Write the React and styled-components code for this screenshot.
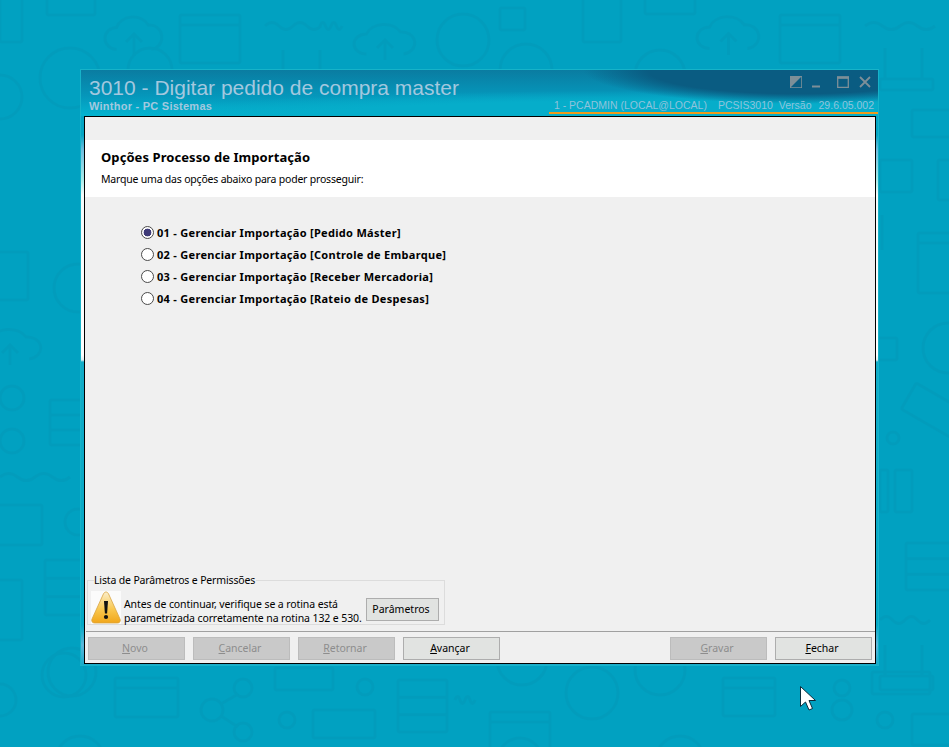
import styled, { createGlobalStyle } from 'styled-components';

const GlobalStyle = createGlobalStyle`
  html, body {
    margin: 0;
    padding: 0;
    background: #01a1c1;
  }
`;

const Desktop = styled.div`
  position: relative;
  width: 949px;
  height: 747px;
  overflow: hidden;
  background: #01a1c1;
  padding: 69px 0 0 80px;
  box-sizing: border-box;
  font-family: "Noto Sans", "DejaVu Sans", sans-serif;
  font-size: 11px;
  color: #000;
`;

const WallpaperSvg = styled.svg`
  position: absolute;
  inset: 0;
  opacity: 0.48;
  filter: blur(0.5px);
`;

const CursorSvg = styled.svg`
  position: absolute;
  left: 799px;
  top: 685px;
`;

const Window = styled.div`
  position: relative;
  width: 799px;
  height: 597px;
  box-sizing: border-box;
  display: flex;
  flex-direction: column;
  border: 1px solid #16b3c9;
  background: linear-gradient(
    180deg,
    #05a5c4 0,
    #05a5c4 65px,
    #6fbfe0 80px,
    #a9ecea 110px,
    #f4fbfb 125px,
    #ffffff 285px,
    #dfeef2 290px,
    #12acc8 292px,
    #05a8c6 555px,
    #5cb8dc 575px,
    #12a8c8 597px
  );
`;

const TitleBar = styled.div`
  position: relative;
  height: 46px;
  flex: none;
  display: flex;
  justify-content: space-between;
  background:
    radial-gradient(ellipse 215px 34px at 90% 0, #0a5c82 0 70%, transparent 100%),
    radial-gradient(ellipse 560px 30px at 72% 110%, #06adca 0 65%, transparent 100%),
    linear-gradient(180deg, #0a7ca1 0, #0596ba 55%, #03b4d0 100%);
`;

const TitleGroup = styled.div`
  padding: 5px 0 0 8px;
`;

const Title = styled.div`
  font-family: "Liberation Sans", Arial, sans-serif;
  font-size: 21px;
  line-height: 25px;
  color: #a3c8df;
`;

const Subtitle = styled.div`
  font-family: "Liberation Sans", Arial, sans-serif;
  font-size: 11px;
  font-weight: bold;
  line-height: 13px;
  letter-spacing: 0.25px;
  color: #a3c8df;
`;

const RightGroup = styled.div`
  display: flex;
  flex-direction: column;
  align-items: stretch;
  width: 329px;
`;

const Controls = styled.div`
  display: flex;
  justify-content: flex-end;
  align-items: center;
  gap: 10px;
  height: 29px;
  box-sizing: border-box;
  padding: 0 7px 5px 0;
`;

const ControlIcon = styled.svg`
  display: block;
  margin-left: ${(p) => p.$gap || 0}px;
`;

const StatusLine = styled.div`
  display: flex;
  justify-content: flex-end;
  height: 13px;
  padding-right: 4px;
  border-bottom: 2px solid #ef9a1c;
  font-family: "Liberation Sans", Arial, sans-serif;
  font-size: 10.5px;
  line-height: 13px;
  color: #8fc3dc;
  white-space: pre;
`;

const StatusItem = styled.span`
  margin-left: ${(p) => p.$gap || 0}px;
`;

const Content = styled.div`
  width: 792px;
  height: 548px;
  margin-left: 3px;
  box-sizing: border-box;
  border: 1px solid #000;
  background: #f0f0f0;
  display: flex;
  flex-direction: column;
`;

const TopStrip = styled.div`
  height: 23px;
  flex: none;
`;

const Banner = styled.div`
  height: 57px;
  flex: none;
  box-sizing: border-box;
  padding: 9px 0 0 16px;
  background: #fff;
`;

const BannerTitle = styled.div`
  font-size: 13px;
  font-weight: 700;
  line-height: 17px;
  color: #000;
  letter-spacing: 0.07px;
`;

const BannerText = styled.div`
  margin-top: 6px;
  font-size: 10.5px;
  line-height: 14px;
  letter-spacing: -0.2px;
`;

const Options = styled.div`
  flex: 1;
  display: flex;
  flex-direction: column;
  padding: 24px 0 0 56px;
`;

const OptionRow = styled.label`
  display: flex;
  align-items: center;
  gap: 3px;
  height: 22px;
  font-size: 11px;
  font-weight: 700;
  letter-spacing: 0.3px;
`;

const Radio = styled.input`
  appearance: none;
  width: 13px;
  height: 13px;
  margin: 0;
  border: 1px solid #4a4a4a;
  border-radius: 50%;
  background: #fff;
  flex: none;
  &:checked {
    background: radial-gradient(circle, #3e3a78 0 3.6px, #fff 4.2px);
  }
`;

const ParamGroup = styled.fieldset`
  width: 358px;
  height: 52px;
  margin: 0 0 6px 2px;
  padding: 0 5px 0 3px;
  box-sizing: border-box;
  border: 1px solid #dcdcdc;
  display: flex;
  align-items: flex-start;
  gap: 3px;
`;

const ParamLegend = styled.legend`
  margin-left: 3px;
  padding: 0 1px 0 0;
  font-size: 10.5px;
  line-height: 15px;
  letter-spacing: -0.15px;
`;

const ParamText = styled.div`
  flex: 1;
  margin-top: 9px;
  font-size: 10.5px;
  line-height: 14px;
  letter-spacing: -0.1px;
  white-space: nowrap;
`;

const WarningIcon = styled.svg`
  flex: none;
  margin-top: 3px;
`;

const ActionButton = styled.button`
  width: ${(p) => p.$width || 97}px;
  height: 23px;
  padding: 0 3px 2px 0;
  box-sizing: border-box;
  border: 1px solid #adadad;
  border-radius: 0;
  background: #e1e3e1;
  color: #000;
  font-family: inherit;
  font-size: 10.5px;
  &:disabled {
    background: #c9c9c9;
    border-color: #bcbcbc;
    color: #8d8d8d;
  }
`;

const ParamButton = styled(ActionButton)`
  flex: none;
  margin-top: 10px;
`;

const Footer = styled.div`
  height: 32px;
  flex: none;
  box-sizing: border-box;
  border-top: 1px solid #a0a0a0;
  margin-left: 1px;
  padding: 5px 3px 0 2px;
  display: flex;
  gap: 8px;
`;

const Spacer = styled.div`
  flex: 1;
`;

const wallpaper = [
  // top row
  ['rect', 0, -4, 22, 46], ['rect', 47, -8, 48, 23], ['cloud', 105, 12, 58, 44], ['rect', 180, 15, 60, 48, 1],
  ['wave', 265, 26, 56], ['circle', 70, 78, 30], ['circle', 0, 97, 22], ['circle', 150, 70, 22],
  ['line', 283, 50, 283, 70], ['line', 320, 50, 320, 70], ['wave', 320, 26, 22],
  ['cloud', 354, 20, 62, 40], ['circle', 463, 40, 26], ['rect', 500, 8, 25, 22], ['circle', 526, 70, 26],
  ['rect', 583, -6, 38, 48], ['circle', 660, 75, 25], ['rect', 645, -10, 50, 24], ['cloud', 697, 12, 63, 43],
  ['rect', 780, 15, 60, 48, 1], ['wave', 865, 26, 70], ['line', 885, 48, 885, 80], ['line', 922, 48, 922, 80],
  // right column
  ['rect', 880, 79, 53, 11], ['rect', 912, 110, 42, 27], ['rect', 880, 160, 32, 32], ['rect', 938, 160, 20, 40],
  ['rect', 918, 233, 40, 60, 1], ['line', 882, 215, 882, 250], ['rect', 870, 338, 27, 22], ['circle', 948, 348, 25],
  ['rect', 905, 395, 56, 30, 0, 30], ['circle', 893, 438, 6], ['rect', 880, 470, 8, 42], ['rect', 895, 470, 17, 42],
  ['server', 906, 543, 50, 47], ['wave', 880, 620, 50], ['rect', 880, 676, 53, 14], ['line', 885, 645, 885, 676],
  ['line', 922, 645, 922, 676], ['rect', 912, 714, 42, 31],
  // left column
  ['rect', -10, 252, 38, 48], ['circle', 78, 288, 24], ['cloud', -22, 325, 64, 40], ['circle', 12, 398, 12],
  ['circle', 12, 441, 12], ['server', 50, 400, 34, 45], ['wave', 0, 477, 70], ['rect', -10, 505, 52, 40],
  ['circle', 78, 522, 13], ['rect', -10, 580, 32, 60], ['server', 45, 560, 38, 55], ['circle', 72, 672, 24],
  ['circle', 0, 700, 16],
  // bottom row
  ['circle', 64, 675, 22], ['rect', 115, 678, 63, 39, 1], ['circle', 243, 688, 9], ['circle', 212, 710, 11],
  ['circle', 243, 732, 9], ['line', 221, 704, 238, 694], ['line', 221, 716, 238, 727], ['rect', 275, 668, 58, 22],
  ['circle', 365, 687, 8], ['circle', 287, 720, 8], ['rect', 313, 710, 62, 28], ['server', 398, 680, 49, 52],
  ['wave', 455, 700, 20], ['rect', 490, 712, 60, 48, 1], ['circle', 522, 660, 25], ['circle', 592, 693, 26],
  ['circle', 660, 670, 25], ['rect', 723, 678, 52, 38, 1], ['circle', 842, 710, 10], ['circle', 842, 688, 8],
  ['rect', 872, 672, 58, 22], ['circle', 885, 720, 8], ['circle', 520, 760, 22], ['circle', 80, 760, 24],
  ['circle', 680, 760, 24]
];

const WallpaperShape = ({ item }) => {
  const [kind, a, b, c, d, e, rot] = item;
  if (kind === 'rect') {
    return (
      <g transform={rot ? `rotate(${rot} ${a + c / 2} ${b + d / 2})` : undefined}>
        <rect x={a} y={b} width={c} height={d} rx="2" />
        {e ? <path d={`M${a} ${b + 10}H${a + c}`} /> : null}
      </g>
    );
  }
  if (kind === 'circle') return <circle cx={a} cy={b} r={c} />;
  if (kind === 'line') return <path d={`M${a} ${b}L${c} ${d}`} />;
  if (kind === 'wave') {
    return <path d={`M${a} ${b}q${c / 8} -7 ${c / 4} 0t${c / 4} 0t${c / 4} 0t${c / 4} 0`} />;
  }
  if (kind === 'cloud') {
    return (
      <path
        d={`M${a + c * 0.2} ${b + d * 0.85}a${c * 0.2} ${d * 0.25} 0 0 1 0 -${d * 0.5}a${c * 0.3} ${d * 0.35} 0 0 1 ${c * 0.55} -${d * 0.05}a${c * 0.2} ${d * 0.27} 0 0 1 ${c * 0.05} ${d * 0.55}M${a + c * 0.5} ${b + d}V${b + d * 0.5}m-8 8l8 -8l8 8`}
      />
    );
  }
  // server
  return (
    <g>
      <rect x={a} y={b} width={c} height={d} rx="2" />
      <path d={`M${a} ${b + d / 3}H${a + c}M${a} ${b + (2 * d) / 3}H${a + c}`} />
    </g>
  );
};

const Wallpaper = () => (
  <WallpaperSvg width="949" height="747" fill="none" stroke="#0598b7" strokeWidth="3">
    {wallpaper.map((item, i) => (
      <WallpaperShape key={i} item={item} />
    ))}
  </WallpaperSvg>
);

const options = [
  '01 - Gerenciar Importação [Pedido Máster]',
  '02 - Gerenciar Importação [Controle de Embarque]',
  '03 - Gerenciar Importação [Receber Mercadoria]',
  '04 - Gerenciar Importação [Rateio de Despesas]'
];

const App = () => (
  <>
    <GlobalStyle />
    <Desktop>
      <Wallpaper />
      <Window>
        <TitleBar>
          <TitleGroup>
            <Title>3010 - Digitar pedido de compra master</Title>
            <Subtitle>Winthor - PC Sistemas</Subtitle>
          </TitleGroup>
          <RightGroup>
            <Controls>
              <ControlIcon width="12" height="12" viewBox="0 0 12 12">
                <path d="M0 0h12v12H0z" fill="none" stroke="#7d8f98" strokeWidth="1.6" />
                <path d="M0 0h12L0 12z" fill="#7d8f98" />
              </ControlIcon>
              <ControlIcon width="8" height="12" viewBox="0 0 8 12">
                <path d="M0 10.5h8" stroke="#7d8f98" strokeWidth="2" />
              </ControlIcon>
              <ControlIcon $gap="7" width="12" height="12" viewBox="0 0 12 12">
                <path d="M.7 1.5h10.6v9.8H.7z" fill="none" stroke="#7d8f98" strokeWidth="1.3" />
                <path d="M0 1.5h12" stroke="#7d8f98" strokeWidth="2.6" />
              </ControlIcon>
              <ControlIcon width="12" height="12" viewBox="0 0 12 12">
                <path d="M1 1l10 10M11 1L1 11" stroke="#7d8f98" strokeWidth="1.8" />
              </ControlIcon>
            </Controls>
            <StatusLine>
              <StatusItem>1 - PCADMIN (LOCAL@LOCAL)</StatusItem>
              <StatusItem $gap="11">PCSIS3010</StatusItem>
              <StatusItem $gap="6">Versão</StatusItem>
              <StatusItem $gap="7">29.6.05.002</StatusItem>
            </StatusLine>
          </RightGroup>
        </TitleBar>
        <Content>
          <TopStrip />
          <Banner>
            <BannerTitle>Opções Processo de Importação</BannerTitle>
            <BannerText>Marque uma das opções abaixo para poder prosseguir:</BannerText>
          </Banner>
          <Options>
            {options.map((text, i) => (
              <OptionRow key={text}>
                <Radio type="radio" name="opcao" defaultChecked={i === 0} />
                {text}
              </OptionRow>
            ))}
          </Options>
          <ParamGroup>
            <ParamLegend>Lista de Parâmetros e Permissões</ParamLegend>
            <WarningIcon width="30" height="33" viewBox="0 0 30 33">
              <defs>
                <linearGradient id="warn" x1="0" y1="0" x2="0" y2="1">
                  <stop offset="0" stopColor="#fbeecb" />
                  <stop offset="0.55" stopColor="#f9c850" />
                  <stop offset="1" stopColor="#f1a61a" />
                </linearGradient>
              </defs>
              <path d="M0 0h30v33H0z" fill="#fbfbfb" />
              <path
                d="M15 1c1.200 0 2 .9 2.600 2L29 28c.9 2 -.2 4 -2.500 4h-23c-2.300 0 -3.400 -2 -2.500 -4L12.400 3c.6 -1.100 1.400 -2 2.600 -2z"
                fill="url(#warn)"
                stroke="#d9a441"
                strokeWidth="0.8"
              />
              <path d="M13 10h4l-.9 12.500h-2.200z" fill="#111" />
              <circle cx="15" cy="26" r="2.100" fill="#111" />
            </WarningIcon>
            <ParamText>
              Antes de continuar, verifique se a rotina está
              <br />
              parametrizada corretamente na rotina 132 e 530.
            </ParamText>
            <ParamButton type="button" $width="73">Parâmetros</ParamButton>
          </ParamGroup>
          <Footer>
            <ActionButton type="button" disabled><u>N</u>ovo</ActionButton>
            <ActionButton type="button" disabled><u>C</u>ancelar</ActionButton>
            <ActionButton type="button" disabled><u>R</u>etornar</ActionButton>
            <ActionButton type="button"><u>A</u>vançar</ActionButton>
            <Spacer />
            <ActionButton type="button" disabled><u>G</u>ravar</ActionButton>
            <ActionButton type="button"><u>F</u>echar</ActionButton>
          </Footer>
        </Content>
      </Window>
      <CursorSvg width="20" height="28" viewBox="0 0 20 28">
        <path d="M1.500 1.500v20l5 -4.500 3.500 8 3.500 -1.500 -3.500 -8h6.500z" fill="#fff" stroke="#0a2a3a" strokeWidth="1" />
      </CursorSvg>
    </Desktop>
  </>
);

export default App;
